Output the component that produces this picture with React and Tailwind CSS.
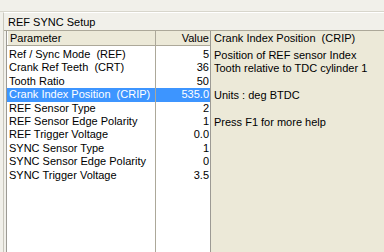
const params = [
  { name: 'Ref / Sync Mode  (REF)', value: '5' },
  { name: 'Crank Ref Teeth  (CRT)', value: '36' },
  { name: 'Tooth Ratio', value: '50' },
  { name: 'Crank Index Position  (CRIP)', value: '535.0', selected: true },
  { name: 'REF Sensor Type', value: '2' },
  { name: 'REF Sensor Edge Polarity', value: '1' },
  { name: 'REF Trigger Voltage', value: '0.0' },
  { name: 'SYNC Sensor Type', value: '1' },
  { name: 'SYNC Sensor Edge Polarity', value: '0' },
  { name: 'SYNC Trigger Voltage', value: '3.5' },
];

const helpLines = [
  'Position of REF sensor Index',
  'Tooth relative to TDC cylinder 1',
  '',
  'Units : deg BTDC',
  '',
  'Press F1 for more help',
];

export default function App() {
  return (
    <div
      className="w-[384px] h-[252px] overflow-hidden bg-[#f1f0ea] text-[11px] leading-[13px] text-black"
      style={{ fontFamily: '"Liberation Sans", Arial, sans-serif' }}
    >
      <div className="h-[12px] border-b border-[#d8d6cc]" />
      <div className="h-[240px] ml-[3px] border-l border-t border-l-[#c9c7bd] border-t-white flex flex-col">
        <div className="h-[17px] pl-[4px] pt-[3px]">REF SYNC Setup</div>
        <div className="flex flex-1 min-h-0 border-t border-[#aca899]">
          {/* parameter list */}
          <div className="w-[205px] ml-[2px] border-l border-r border-[#9c9a94] bg-white flex flex-col">
            <div className="flex h-[15px] bg-[#ece9d8] border-b border-[#aca899]">
              <div className="w-[149px] pl-[2px] pt-[1px] border-r border-[#aca899] border-l border-l-white">
                Parameter
              </div>
              <div className="flex-1 pr-[1px] pt-[1px] text-right">Value</div>
            </div>
            <div className="flex flex-1">
              <div className="w-[149px] border-r border-[#aca899] pt-[2px]">
                {params.map((p) => (
                  <div
                    key={p.name}
                    className={`h-[13.4px] pl-[2px] whitespace-pre ${p.selected ? 'bg-[#3d95ff] text-white' : ''}`}
                  >
                    {p.name}
                  </div>
                ))}
              </div>
              <div className="flex-1 pt-[2px]">
                {params.map((p) => (
                  <div
                    key={p.name}
                    className={`h-[13.4px] pr-[1px] text-right ${p.selected ? 'bg-[#3d95ff] text-white' : ''}`}
                  >
                    {p.value}
                  </div>
                ))}
              </div>
            </div>
          </div>
          {/* help panel */}
          <div className="flex-1 bg-[#ece9d8] flex flex-col pl-[3px]">
            <div className="h-[15px] pt-[1px] whitespace-pre">Crank Index Position  (CRIP)</div>
            <div className="pt-[3px]">
              {helpLines.map((l, i) => (
                <div key={i} className="h-[13.4px] whitespace-pre">
                  {l}
                </div>
              ))}
            </div>
          </div>
        </div>
      </div>
    </div>
  );
}
